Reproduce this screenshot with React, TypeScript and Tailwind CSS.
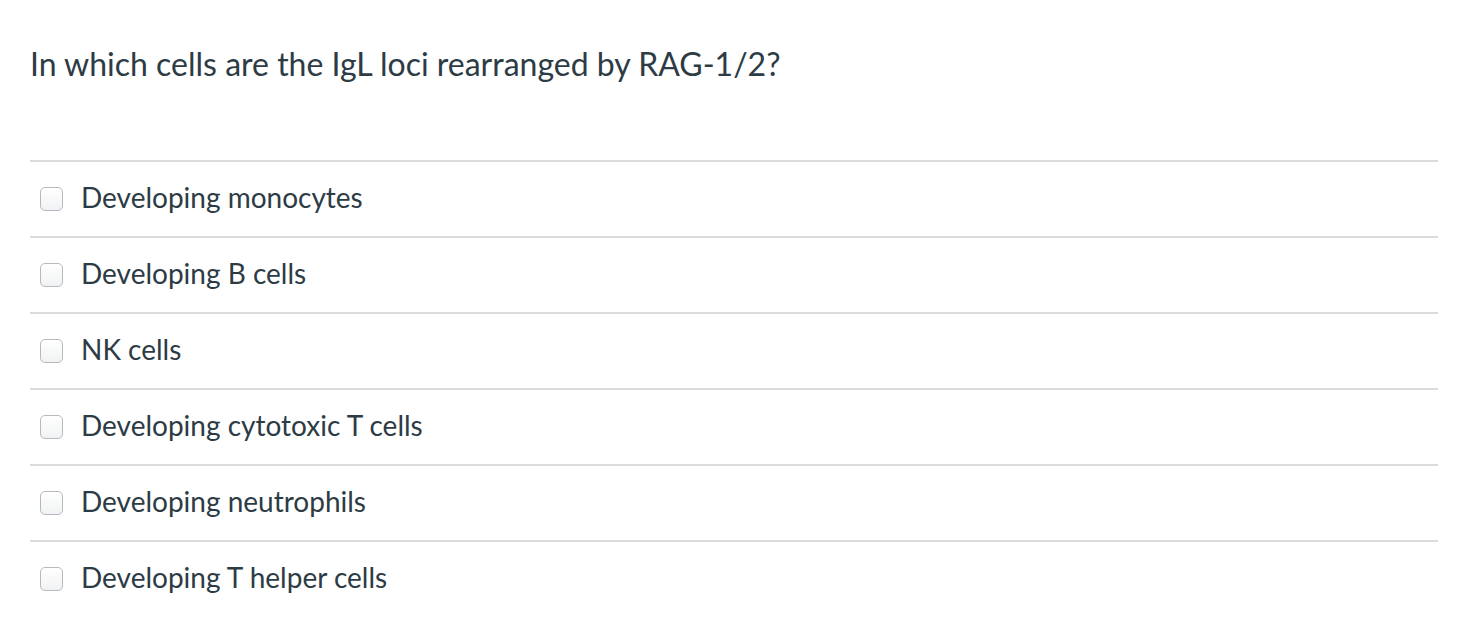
const options = [
  'Developing monocytes',
  'Developing B cells',
  'NK cells',
  'Developing cytotoxic T cells',
  'Developing neutrophils',
  'Developing T helper cells',
]

export default function App() {
  return (
    <div className="min-h-[634px] bg-white pl-[30px] pr-[22px] text-[#2d3b45]" style={{ fontFamily: 'Lato, "Noto Sans", sans-serif' }}>
      <div className="pt-[44px] pb-[76px] text-[32px] leading-[40px]">
        In which cells are the IgL loci rearranged by RAG-1/2?
      </div>
      <div>
        {options.map((o) => (
          <label key={o} className="flex h-[76px] items-center border-t-2 border-[#dcdcdc]">
            <span className="ml-[10px] mr-[18px] h-[24px] w-[23px] rounded-[5px] border border-[#b4bbc0] bg-gradient-to-b from-white to-[#f1f2f3]" />
            <span className="pb-[5px] text-[28px]">{o}</span>
          </label>
        ))}
      </div>
    </div>
  )
}
